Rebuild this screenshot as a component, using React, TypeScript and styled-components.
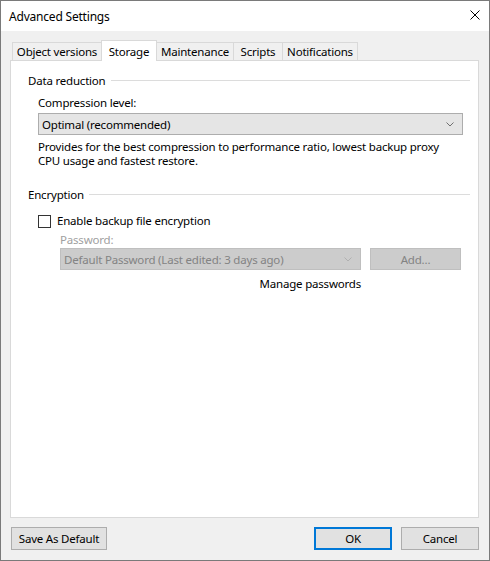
import React from "react";
import styled, { createGlobalStyle } from "styled-components";

const GlobalStyle = createGlobalStyle`
  html, body { margin: 0; padding: 0; background: #ffffff; }
  body {
    font-family: "Segoe UI", "Noto Sans", "DejaVu Sans", sans-serif;
    font-size: 11.5px;
    letter-spacing: -0.2px;
    color: #000000;
  }
  * { box-sizing: border-box; }
`;

const Window = styled.div`
  width: 490px;
  height: 561px;
  border: 1px solid #7a7a7a;
  display: flex;
  flex-direction: column;
  background: #f0f0f0;
`;

const TitleBar = styled.div`
  height: 30px;
  flex: none;
  background: #ffffff;
  display: flex;
  align-items: center;
  justify-content: space-between;
  padding: 1px 9px 0 8px;
  line-height: 16px;
`;

const Title = styled.span`
  font-size: 12px;
`;

const CloseIcon = styled.svg`
  width: 10px;
  height: 10px;
  margin-bottom: 3px;
`;

const Body = styled.div`
  flex: 1;
  display: flex;
  flex-direction: column;
  padding: 9px 10px 10px 9px;
  min-height: 0;
`;

const TabStrip = styled.div`
  display: flex;
  align-items: flex-end;
  height: 20px;
  padding-left: 2px;
  position: relative;
  z-index: 1;
`;

const Tab = styled.div<{ $active?: boolean; $w: number }>`
  width: ${(p) => p.$w}px;
  height: ${(p) => (p.$active ? 21 : 18)}px;
  margin-bottom: ${(p) => (p.$active ? -1 : 0)}px;
  margin-left: -1px;
  &:first-child { margin-left: 0; }
  border: 1px solid #d9d9d9;
  border-bottom: none;
  background: ${(p) => (p.$active ? "#ffffff" : "#f0f0f0")};
  position: relative;
  z-index: ${(p) => (p.$active ? 2 : 1)};
  display: flex;
  justify-content: center;
  align-items: flex-start;
  padding-top: ${(p) => (p.$active ? 3 : 1)}px;
  line-height: 16px;
  white-space: nowrap;
`;

const Panel = styled.div`
  flex: 1;
  background: #ffffff;
  border: 1px solid #d9d9d9;
  padding: 12px 8px 0 17px;
  display: flex;
  flex-direction: column;
`;

const GroupHeader = styled.div<{ $mt?: number }>`
  display: flex;
  align-items: center;
  gap: 5px;
  line-height: 16px;
  margin-top: ${(p) => p.$mt ?? 0}px;
`;

const GroupLine = styled.div`
  flex: 1;
  height: 1px;
  background: #dcdcdc;
  margin-top: -1px;
`;

const GroupContent = styled.div`
  margin: 0 7px 0 10px;
  display: flex;
  flex-direction: column;
`;

const FieldLabel = styled.div<{ $disabled?: boolean; $mt?: number }>`
  line-height: 16px;
  color: ${(p) => (p.$disabled ? "#a0a0a0" : "#000000")};
  margin-top: ${(p) => p.$mt ?? 0}px;
`;

const Combo = styled.div<{ $disabled?: boolean; $mt?: number }>`
  height: 22px;
  margin-top: ${(p) => p.$mt ?? 0}px;
  background: ${(p) => (p.$disabled ? "#cccccc" : "#e5e5e5")};
  border: 1px solid ${(p) => (p.$disabled ? "#bfbfbf" : "#adadad")};
  color: ${(p) => (p.$disabled ? "#838383" : "#000000")};
  display: flex;
  align-items: center;
  justify-content: space-between;
  padding: 1px 8px 0 3px;
  line-height: 16px;
  white-space: nowrap;
`;

const Chevron = styled.svg`
  width: 8px;
  height: 5px;
  flex: none;
`;

const Description = styled.div`
  margin-top: 5px;
  line-height: 14px;
  white-space: nowrap;
`;

const CheckRow = styled.label`
  display: flex;
  align-items: center;
  gap: 6px;
  line-height: 16px;
  margin-top: 10px;
  height: 16px;
`;

const CheckBox = styled.span`
  width: 13px;
  height: 13px;
  border: 1px solid #333333;
  background: #ffffff;
  flex: none;
  margin-top: 1px;
`;

const PasswordGrid = styled.div`
  margin-left: 22px;
  margin-top: 3px;
  display: grid;
  grid-template-columns: 301px 91px;
  column-gap: 9px;
`;

const GreyButton = styled.div`
  height: 22px;
  background: #cccccc;
  border: 1px solid #bfbfbf;
  color: #838383;
  display: flex;
  align-items: center;
  justify-content: center;
  padding-top: 1px;
  line-height: 16px;
`;

const LinkText = styled.div`
  grid-column: 1;
  justify-self: end;
  line-height: 16px;
  margin-top: 6px;
  color: #000000;
`;

const Footer = styled.div`
  display: flex;
  gap: 9px;
  margin-top: 9px;
  padding-left: 1px;
`;

const Spacer = styled.div`
  flex: 1;
`;

const Button = styled.div<{ $w: number; $default?: boolean }>`
  width: ${(p) => p.$w}px;
  height: 23px;
  background: #e1e1e1;
  border: ${(p) => (p.$default ? "2px solid #0078d7" : "1px solid #adadad")};
  display: flex;
  align-items: center;
  justify-content: center;
  padding-top: 1px;
  line-height: 16px;
  white-space: nowrap;
`;

const ChevronIcon = ({ color }: { color: string }) => (
  <Chevron viewBox="0 0 8 5">
    <polyline points="0.5,0.5 4,4 7.5,0.5" fill="none" stroke={color} strokeWidth="1" />
  </Chevron>
);

const tabs: { label: string; w: number; active?: boolean }[] = [
  { label: "Object versions", w: 90 },
  { label: "Storage", w: 56, active: true },
  { label: "Maintenance", w: 78 },
  { label: "Scripts", w: 50 },
  { label: "Notifications", w: 76 },
];

export default function App() {
  return (
    <>
      <GlobalStyle />
      <Window>
        <TitleBar>
          <Title>Advanced Settings</Title>
          <CloseIcon viewBox="0 0 10 10">
            <path d="M0.5 0.5 L9.5 9.5 M9.5 0.5 L0.5 9.5" stroke="#000" strokeWidth="1" fill="none" />
          </CloseIcon>
        </TitleBar>
        <Body>
          <TabStrip>
            {tabs.map((t) => (
              <Tab key={t.label} $w={t.w} $active={t.active}>
                {t.label}
              </Tab>
            ))}
          </TabStrip>
          <Panel>
            <GroupHeader>
              <span>Data reduction</span>
              <GroupLine />
            </GroupHeader>
            <GroupContent>
              <FieldLabel $mt={6}>Compression level:</FieldLabel>
              <Combo $mt={2}>
                <span>Optimal (recommended)</span>
                <ChevronIcon color="#707070" />
              </Combo>
              <Description>
                Provides for the best compression to performance ratio, lowest backup proxy
                <br />
                CPU usage and fastest restore.
              </Description>
            </GroupContent>
            <GroupHeader $mt={19}>
              <span>Encryption</span>
              <GroupLine />
            </GroupHeader>
            <GroupContent>
              <CheckRow>
                <CheckBox />
                <span>Enable backup file encryption</span>
              </CheckRow>
              <PasswordGrid>
                <FieldLabel $disabled>Password:</FieldLabel>
                <div />
                <Combo $disabled>
                  <span>Default Password (Last edited: 3 days ago)</span>
                  <ChevronIcon color="#b0b0b0" />
                </Combo>
                <GreyButton>Add...</GreyButton>
                <LinkText>Manage passwords</LinkText>
              </PasswordGrid>
            </GroupContent>
          </Panel>
          <Footer>
            <Button $w={96}>Save As Default</Button>
            <Spacer />
            <Button $w={78} $default>
              OK
            </Button>
            <Button $w={78}>Cancel</Button>
          </Footer>
        </Body>
      </Window>
    </>
  );
}
